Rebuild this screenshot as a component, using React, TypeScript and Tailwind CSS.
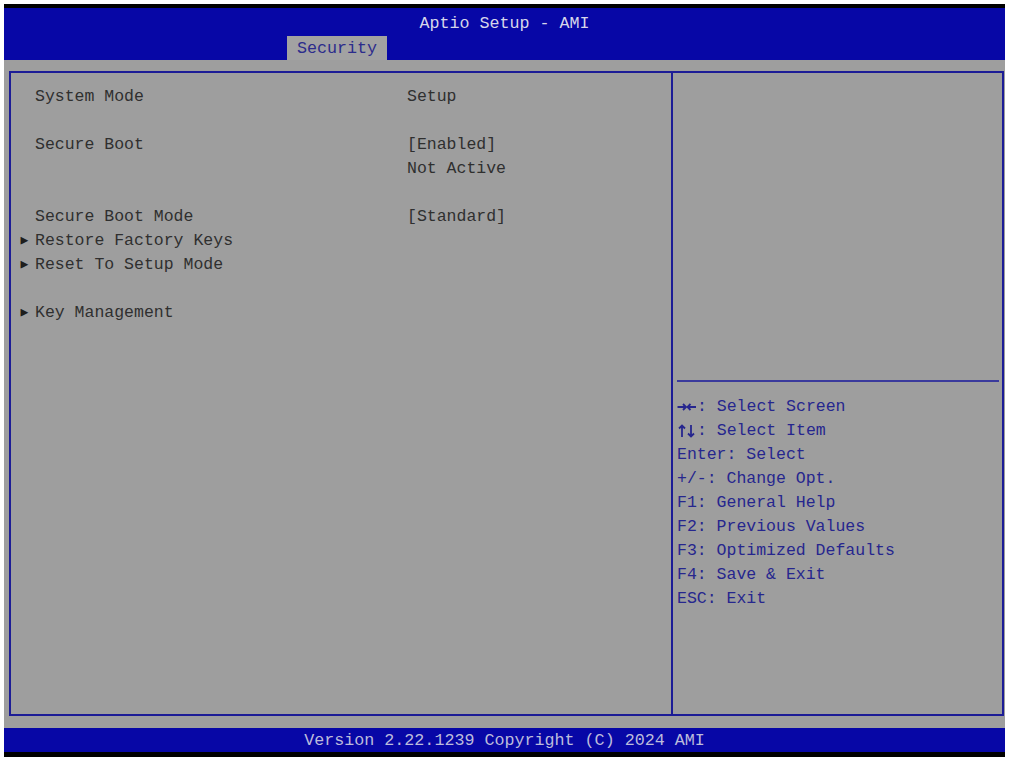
import React from 'react';

const mono = "font-['Liberation_Mono','DejaVu_Sans_Mono',monospace]";

const items = [
  { label: 'System Mode', value: 'Setup' },
  { label: '', value: '' },
  { label: 'Secure Boot', value: '[Enabled]' },
  { label: '', value: 'Not Active' },
  { label: '', value: '' },
  { label: 'Secure Boot Mode', value: '[Standard]' },
  { label: 'Restore Factory Keys', value: '', sub: true },
  { label: 'Reset To Setup Mode', value: '', sub: true },
  { label: '', value: '' },
  { label: 'Key Management', value: '', sub: true },
];

function LeftRight() {
  return (
    <svg width="20" height="12" viewBox="0 0 20 12" fill="none" stroke="currentColor" strokeWidth="1.8">
      <path d="M0.5 6h8M6 3l3 3-3 3" />
      <path d="M19 6h-8M13.5 3l-3 3 3 3" />
    </svg>
  );
}

function UpDown() {
  return (
    <svg width="20" height="14" viewBox="0 0 20 14" fill="none" stroke="currentColor" strokeWidth="1.8">
      <path d="M5 13V1.5M2 4.5l3-3 3 3" />
      <path d="M14 1v11.5M11 9.5l3 3 3-3" />
    </svg>
  );
}

const help: [React.ReactNode, string][] = [
  [<LeftRight />, ': Select Screen'],
  [<UpDown />, ': Select Item'],
  [null, 'Enter: Select'],
  [null, '+/-: Change Opt.'],
  [null, 'F1: General Help'],
  [null, 'F2: Previous Values'],
  [null, 'F3: Optimized Defaults'],
  [null, 'F4: Save & Exit'],
  [null, 'ESC: Exit'],
];

export default function App() {
  return (
    <div className={`w-[1012px] h-[757px] bg-white pl-[4px] pr-[7px] pt-[4px] flex flex-col ${mono}`}>
      <div className="h-[4px] bg-black" />
      {/* header */}
      <div className="h-[52px] bg-[#0707a6] flex flex-col">
        <div className="h-[28px] flex items-center justify-center text-[16.7px] text-[#d6d6ea] pt-[4px]">
          Aptio Setup - AMI
        </div>
        <div className="flex-1 flex items-end">
          <div className="ml-[283px] w-[100px] h-[24px] bg-[#a2a2a2] flex items-center justify-center text-[16.7px] text-[#2c2c8c] pt-[1px]">
            Security
          </div>
        </div>
      </div>

      {/* body */}
      <div className="h-[668px] bg-[#9e9e9e] pt-[11px] pl-[5px] pr-[1px] pb-[12px] flex">
        <div className="flex-1 border-2 border-[#1c1c96] flex">
          <div className="w-[662px] border-r-2 border-[#1c1c96] pt-[12px] text-[16.5px] text-[#2f2f2f]">
            {items.map((it, i) => (
              <div key={i} className="h-[24px] flex items-center">
                <div className="w-[24px] flex justify-center pl-[3px]">
                  {it.sub && <span className="text-[13px] text-[#1e1e1e]">▶</span>}
                </div>
                <div className="w-[372px] whitespace-pre">{it.label}</div>
                <div className="whitespace-pre">{it.value}</div>
              </div>
            ))}
          </div>
          <div className="flex-1 flex flex-col">
            <div className="h-[307px]" />
            <div className="ml-[4px] mr-[3px] h-[2px] bg-[#3a3a9c]" />
            <div className="pt-[13px] pl-[4px] text-[16.5px] text-[#26268e]">
              {help.map(([a, t], i) => (
                <div key={i} className="h-[24px] flex items-center whitespace-pre">
                  {a}
                  <span>{t}</span>
                </div>
              ))}
            </div>
          </div>
        </div>
      </div>

      {/* footer */}
      <div className="h-[24px] bg-[#0707a6] flex items-center justify-center text-[16.7px] text-[#bcbcdc] pt-[1px]">
        Version 2.22.1239 Copyright (C) 2024 AMI
      </div>
      <div className="flex-1 bg-black" />
    </div>
  );
}
